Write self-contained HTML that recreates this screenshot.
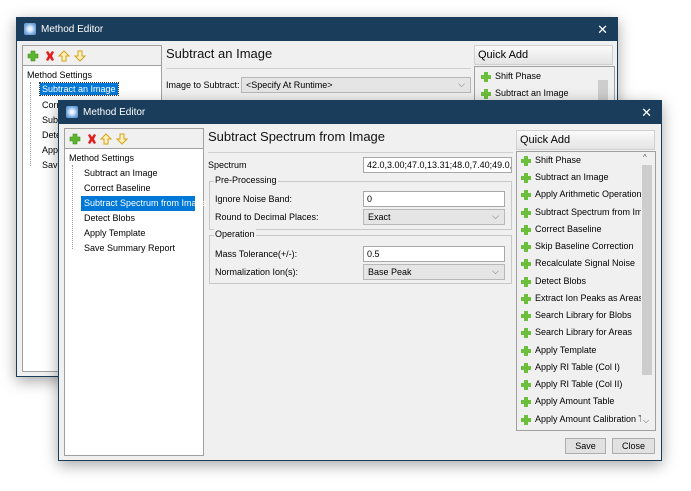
<!DOCTYPE html><html><head><style>
body{margin:0;width:691px;height:491px;background:#fff;position:relative;overflow:hidden;font-family:"Liberation Sans",Tahoma,sans-serif;font-size:9px;color:#000}
.a{position:absolute;white-space:nowrap}
.win{position:absolute;background:#f0f0f0;border:1px solid #1a3d5c;box-shadow:0 4px 14px rgba(0,0,0,.35)}
.tb{position:absolute;left:0;right:0;top:0;height:23px;background:#1a3d5c;color:#fff;font-size:10px}
.tb .t{position:absolute;left:24px;top:6px}
.tb .ic{position:absolute;left:7px;top:5px;width:12px;height:12px;border-radius:2px;background:radial-gradient(circle,#e8f4ff 20%,#6a9fd8 70%)}
.tb .x{position:absolute;right:9px;top:4px;font-size:13px}
.box{position:absolute;background:#fff;border:1px solid #a0a0a0}
.tbar{position:absolute;background:#f0f0f0;border:1px solid #a0a0a0}
.tree div{position:absolute;white-space:nowrap}
.h{position:absolute;font-size:13px;color:#111;white-space:nowrap}
.fld{position:absolute;background:#fff;border:1px solid #a8a8a8;padding-left:3px;line-height:14px;box-sizing:border-box;white-space:nowrap;overflow:hidden}
.cmb{position:absolute;background:#e5e5e5;border:1px solid #b8b8b8;padding-left:4px;line-height:14px;box-sizing:border-box}
.cmb:after{content:"⌵";position:absolute;right:5px;top:-1px;color:#666;font-size:9px}
.grp{position:absolute;border:1px solid #c8c8c8}
.grp span{position:absolute;top:-7px;left:4px;background:#f0f0f0;padding:0 1px}
.qh{position:absolute;background:linear-gradient(#fafafa,#e4e4e4);border:1px solid #d0d0d0;font-size:11px;padding:3px 0 0 3px;box-sizing:border-box}
.ql div{position:absolute;left:4px;white-space:nowrap;padding-left:16px}
.ql div:before{content:"";position:absolute;left:2px;top:1px;width:10px;height:10px;background:linear-gradient(#6cbf3a,#6cbf3a) center/4px 10px no-repeat,linear-gradient(#6cbf3a,#6cbf3a) center/10px 4px no-repeat}
.btn{position:absolute;background:#e1e1e1;border:1px solid #adadad;text-align:center;line-height:14px;box-sizing:border-box}
.dot{position:absolute;border-left:1px dotted #999}
</style></head><body>

<svg width="0" height="0" style="position:absolute"><defs><g id="tools">
   <path d="M4 1h4v3h3v4H8v3H4V8H1V4h3z" fill="#5cb52e" stroke="#3c8a1a" stroke-width=".6"/>
   <path d="M19 2l2-1 2 3 2-3 2 1-2 4 2 4-2 1-2-3-2 3-2-1 2-4z" fill="#e02020"/>
   <path d="M37 1l5 5h-3v5h-4V6h-3z" fill="#fff2c0" stroke="#d4a017"/>
   <path d="M53 11l5-5h-3V1h-4v5h-3z" fill="#fff2c0" stroke="#d4a017"/>
</g></defs></svg>

<!-- back window -->
<div class="win" style="left:16px;top:17px;width:600px;height:358px">
 <div class="tb"><div class="ic"></div><div class="t">Method Editor</div><div class="x">✕</div></div>
 <div class="tbar" style="left:5px;top:27px;width:138px;height:20px"><svg class="a" style="left:4px;top:4px" width="70" height="12"><use href="#tools"/></svg></div>
 <div class="box" style="left:5px;top:47px;width:138px;height:305px"></div>
 <div class="a" style="left:10px;top:52px">Method Settings</div>
 <div class="dot" style="left:13px;top:64px;height:84px"></div>
 <div class="a" style="left:23px;top:65px;background:#0078d7;color:#fff;padding:1px 2px;outline:1px dotted #333">Subtract an Image</div>
 <div class="a" style="left:25px;top:82px">Corre</div>
 <div class="a" style="left:25px;top:97px">Subt</div>
 <div class="a" style="left:25px;top:112px">Dete</div>
 <div class="a" style="left:25px;top:127px">Apply</div>
 <div class="a" style="left:25px;top:142px">Save</div>
 <div class="h" style="left:149px;top:28px">Subtract an Image</div>
 <div class="a" style="left:149px;top:50px;width:305px;border-top:1px solid #d0d0d0"></div>
 <div class="a" style="left:149px;top:62px">Image to Subtract:</div>
 <div class="cmb" style="left:224px;top:59px;width:230px;height:16px">&lt;Specify At Runtime&gt;</div>
 <div class="qh" style="left:457px;top:27px;width:139px;height:20px">Quick Add</div>
 <div class="box" style="left:457px;top:48px;width:139px;height:300px;background:#f0f0f0"></div>
 <div class="a" style="left:581px;top:62px;width:10px;height:200px;background:#cdcdcd"></div>
 <div class="ql"><div style="left:462px;top:53px">Shift Phase</div><div style="left:462px;top:70px">Subtract an Image</div></div>
</div>

<!-- front window -->
<div class="win" style="left:58px;top:100px;width:602px;height:359px">
 <div class="tb"><div class="ic"></div><div class="t">Method Editor</div><div class="x">✕</div></div>
 <div class="tbar" style="left:5px;top:27px;width:138px;height:20px"><svg class="a" style="left:4px;top:4px" width="70" height="12"><use href="#tools"/></svg></div>
 <div class="box" style="left:5px;top:47px;width:138px;height:306px"></div>
 <div class="tree">
  <div style="left:10px;top:52px">Method Settings</div>
  <div class="dot" style="left:13px;top:64px;height:84px"></div>
  <div style="left:25px;top:67px">Subtract an Image</div>
  <div style="left:25px;top:82px">Correct Baseline</div>
  <div style="left:22px;top:95px;width:114px;height:15px;background:#0078d7"></div>
  <div style="left:25px;top:97px;color:#fff">Subtract Spectrum from Image</div>
  <div style="left:25px;top:112px">Detect Blobs</div>
  <div style="left:25px;top:127px">Apply Template</div>
  <div style="left:25px;top:142px">Save Summary Report</div>
 </div>
 <div class="h" style="left:149px;top:28px">Subtract Spectrum from Image</div>
 <div class="a" style="left:149px;top:51px;width:305px;border-top:1px solid #d0d0d0"></div>
 <div class="a" style="left:149px;top:59px">Spectrum</div>
 <div class="fld" style="left:304px;top:56px;width:149px;height:16px">42.0,3.00;47.0,13.31;48.0,7.40;49.0,1</div>
 <div class="grp" style="left:150px;top:80px;width:301px;height:47px"><span>Pre-Processing</span></div>
 <div class="a" style="left:156px;top:93px">Ignore Noise Band:</div>
 <div class="fld" style="left:304px;top:90px;width:142px;height:16px">0</div>
 <div class="a" style="left:156px;top:111px">Round to Decimal Places:</div>
 <div class="cmb" style="left:304px;top:108px;width:142px;height:16px">Exact</div>
 <div class="grp" style="left:150px;top:134px;width:301px;height:47px"><span>Operation</span></div>
 <div class="a" style="left:156px;top:148px">Mass Tolerance(+/-):</div>
 <div class="fld" style="left:304px;top:145px;width:142px;height:16px">0.5</div>
 <div class="a" style="left:156px;top:166px">Normalization Ion(s):</div>
 <div class="cmb" style="left:304px;top:163px;width:142px;height:16px">Base Peak</div>
 <div class="qh" style="left:457px;top:29px;width:139px;height:20px">Quick Add</div>
 <div class="box" style="left:457px;top:50px;width:138px;height:278px;background:#f0f0f0"></div>
 <div class="a" style="left:582px;top:51px;width:12px;height:276px;background:#f0f0f0"></div>
 <div class="a" style="left:583px;top:64px;width:10px;height:210px;background:#cdcdcd"></div>
 <div class="a" style="left:584px;top:52px;font-size:8px;color:#555">^</div>
 <div class="a" style="left:584px;top:315px;font-size:8px;color:#555">⌵</div>
 <div class="ql" style="position:absolute;left:0;top:0;width:582px;height:340px;overflow:hidden">
  <div style="left:460px;top:54px">Shift Phase</div>
  <div style="left:460px;top:71px">Subtract an Image</div>
  <div style="left:460px;top:88px">Apply Arithmetic Operation w</div>
  <div style="left:460px;top:106px">Subtract Spectrum from Imag</div>
  <div style="left:460px;top:123px">Correct Baseline</div>
  <div style="left:460px;top:140px">Skip Baseline Correction</div>
  <div style="left:460px;top:157px">Recalculate Signal Noise</div>
  <div style="left:460px;top:175px">Detect Blobs</div>
  <div style="left:460px;top:192px">Extract Ion Peaks as Areas</div>
  <div style="left:460px;top:209px">Search Library for Blobs</div>
  <div style="left:460px;top:226px">Search Library for Areas</div>
  <div style="left:460px;top:244px">Apply Template</div>
  <div style="left:460px;top:261px">Apply RI Table (Col I)</div>
  <div style="left:460px;top:278px">Apply RI Table (Col II)</div>
  <div style="left:460px;top:295px">Apply Amount Table</div>
  <div style="left:460px;top:313px">Apply Amount Calibration Tab</div>
 </div>
 <div class="btn" style="left:506px;top:337px;width:41px;height:16px">Save</div>
 <div class="btn" style="left:553px;top:337px;width:43px;height:16px">Close</div>
</div>
</body></html>
